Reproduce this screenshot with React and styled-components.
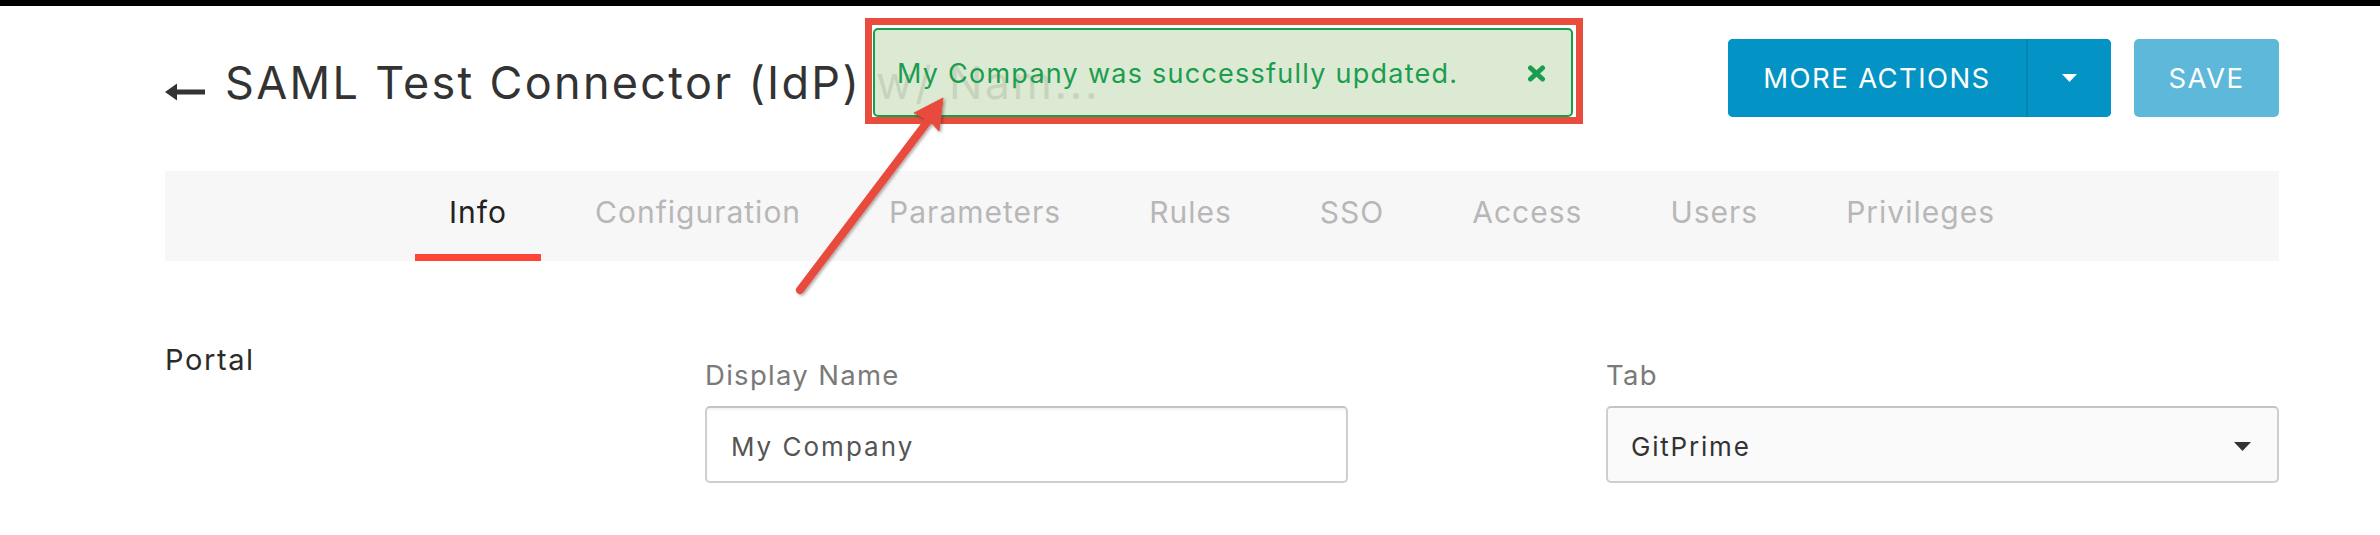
import React from 'react';
import styled, { createGlobalStyle } from 'styled-components';

const GlobalStyle = createGlobalStyle`
  html, body { margin: 0; padding: 0; background: #ffffff; }
  body { font-family: Inter, "DejaVu Sans", sans-serif; color: #333; }
  * { box-sizing: border-box; }
`;

const Root = styled.div`
  position: relative;
  width: 2380px;
  height: 535px;
  overflow: hidden;
`;

const TopBar = styled.div`
  height: 6px;
  background: #000;
`;

const Content = styled.main`
  padding: 0 101px 0 165px;
`;

const Header = styled.header`
  margin-top: 33px;
  height: 78px;
  display: flex;
  align-items: center;
  justify-content: space-between;
`;

const Title = styled.h1`
  margin: 9px 0 0 0;
  display: flex;
  align-items: center;
  gap: 20px;
  font-size: 45px;
  font-weight: 400;
  letter-spacing: 2.3px;
  line-height: 60px;
  color: #333;
  white-space: nowrap;
`;

const BackIcon = styled.svg`
  flex: none;
  margin-top: 19px;
  display: block;
`;

const Muted = styled.span`
  color: #a9a9a9;
`;

const Actions = styled.div`
  display: flex;
  gap: 23px;
`;

const SplitButton = styled.div`
  display: flex;
  height: 78px;
  border-radius: 5px;
  overflow: hidden;
  background: #0393c5;
`;

const ButtonBase = styled.button`
  border: 0;
  margin: 0;
  height: 78px;
  font-family: Inter, "DejaVu Sans", sans-serif;
  font-size: 27.5px;
  letter-spacing: 1.4px;
  color: #fff;
  text-transform: uppercase;
  display: flex;
  align-items: center;
  justify-content: center;
  cursor: pointer;
`;

const MainAction = styled(ButtonBase)`
  width: 300px;
  background: #0393c5;
  border-right: 2px solid #0384b3;
`;

const CaretAction = styled(ButtonBase)`
  width: 83px;
  background: #0393c5;
`;

const SaveButton = styled(ButtonBase)`
  width: 145px;
  background: #5db8da;
  border-radius: 5px;
`;

const TabBar = styled.nav`
  margin-top: 54px;
  height: 90px;
  background: #f7f7f7;
  display: flex;
  justify-content: center;
  gap: 20px;
`;

const Tab = styled.div`
  height: 90px;
  padding: 0 34px;
  border-bottom: 7px solid ${p => (p.$active ? '#ff4438' : 'transparent')};
  line-height: 83px;
  font-size: 30px;
  letter-spacing: 1px;
  color: ${p => (p.$active ? '#222' : '#b7b7b7')};
  white-space: nowrap;
`;

const Section = styled.section`
  margin-top: 82px;
  display: flex;
`;

const SectionLabel = styled.div`
  width: 540px;
  flex: none;
  font-size: 29px;
  line-height: 34px;
  letter-spacing: 1.6px;
  color: #2b2b2b;
`;

const Fields = styled.div`
  flex: 1;
  display: flex;
  gap: 258px;
  padding-top: 15px;
`;

const Field = styled.div`
  display: flex;
  flex-direction: column;
  width: ${p => p.$width || 'auto'};
  flex: ${p => (p.$width ? 'none' : '1')};
`;

const FieldLabel = styled.label`
  font-size: 27.5px;
  line-height: 34px;
  letter-spacing: 1.3px;
  color: #7a7a7a;
  margin-bottom: 14px;
`;

const TextInput = styled.input`
  height: 77px;
  width: 100%;
  border: 2px solid #cfcfcf;
  border-top-color: #c4c4c4;
  border-radius: 5px;
  box-shadow: inset 0 2px 2px rgba(0, 0, 0, 0.05);
  padding: 4px 24px 0;
  font-family: Inter, "DejaVu Sans", sans-serif;
  font-size: 26px;
  letter-spacing: 2px;
  color: #555;
  background: #fff;
  outline: none;
`;

const SelectBox = styled.div`
  height: 77px;
  border: 2px solid #cfcfcf;
  border-top-color: #c4c4c4;
  border-radius: 5px;
  background: #fafafa;
  display: flex;
  align-items: center;
  justify-content: space-between;
  padding: 4px 26px 0 23px;
  font-size: 26px;
  letter-spacing: 1.8px;
  color: #333;
`;

const Toast = styled.div`
  position: absolute;
  left: 865px;
  top: 18px;
  width: 718px;
  height: 106px;
  border: 7px solid #e84c3d;
  padding: 3px 3px 0 1px;
`;

const ToastInner = styled.div`
  height: 100%;
  border: 2px solid #12a04f;
  border-radius: 5px;
  background: rgba(210, 227, 196, 0.75);
  display: flex;
  align-items: center;
  justify-content: space-between;
  padding: 1px 25px 0 22px;
  font-size: 27px;
  letter-spacing: 1.25px;
  color: #1a9d4f;
  white-space: nowrap;
`;

const Annotation = styled.svg`
  position: absolute;
  left: 0;
  top: 0;
  pointer-events: none;
`;

const tabs = ['Info', 'Configuration', 'Parameters', 'Rules', 'SSO', 'Access', 'Users', 'Privileges'];

export default function App() {
  return (
    <Root>
      <GlobalStyle />
      <TopBar />
      <Content>
        <Header>
          <Title>
            <BackIcon width="40" height="18" viewBox="0 0 40 18">
              <polygon points="0,9 12,0.5 12,17.5" fill="#333" />
              <rect x="10" y="6.5" width="30" height="5" fill="#333" />
            </BackIcon>
            <span>
              SAML Test Connector (IdP) <Muted>w/ Nam...</Muted>
            </span>
          </Title>
          <Actions>
            <SplitButton>
              <MainAction>More Actions</MainAction>
              <CaretAction aria-label="More">
                <svg width="15" height="8" viewBox="0 0 15 8">
                  <polygon points="0,0 15,0 7.5,8" fill="#fff" />
                </svg>
              </CaretAction>
            </SplitButton>
            <SaveButton>Save</SaveButton>
          </Actions>
        </Header>

        <TabBar>
          {tabs.map((t, i) => (
            <Tab key={t} $active={i === 0}>
              {t}
            </Tab>
          ))}
        </TabBar>

        <Section>
          <SectionLabel>Portal</SectionLabel>
          <Fields>
            <Field $width="643px">
              <FieldLabel>Display Name</FieldLabel>
              <TextInput readOnly value="My Company" />
            </Field>
            <Field>
              <FieldLabel>Tab</FieldLabel>
              <SelectBox>
                <span>GitPrime</span>
                <svg width="17" height="9" viewBox="0 0 17 9">
                  <polygon points="0,0 17,0 8.5,9" fill="#333" />
                </svg>
              </SelectBox>
            </Field>
          </Fields>
        </Section>
      </Content>

      <Toast>
        <ToastInner>
          <span>My Company was successfully updated.</span>
          <svg width="19" height="17" viewBox="0 0 19 17">
            <path d="M3.5 3 L15.5 14 M15.5 3 L3.5 14" stroke="#1a9d4f" strokeWidth="5" strokeLinecap="round" />
          </svg>
        </ToastInner>
      </Toast>

      <Annotation width="2380" height="535" viewBox="0 0 2380 535">
        <defs>
          <filter id="shadow" x="-20%" y="-20%" width="140%" height="140%">
            <feDropShadow dx="1.5" dy="1.5" stdDeviation="1.5" floodColor="#000" floodOpacity="0.35" />
          </filter>
        </defs>
        <g filter="url(#shadow)" fill="#e84c3d" stroke="#e84c3d">
          <line x1="800" y1="290" x2="928" y2="121" strokeWidth="8" strokeLinecap="round" />
          <polygon points="943,98 939,131 929,120 914,113" strokeWidth="1" strokeLinejoin="round" />
        </g>
      </Annotation>
    </Root>
  );
}
